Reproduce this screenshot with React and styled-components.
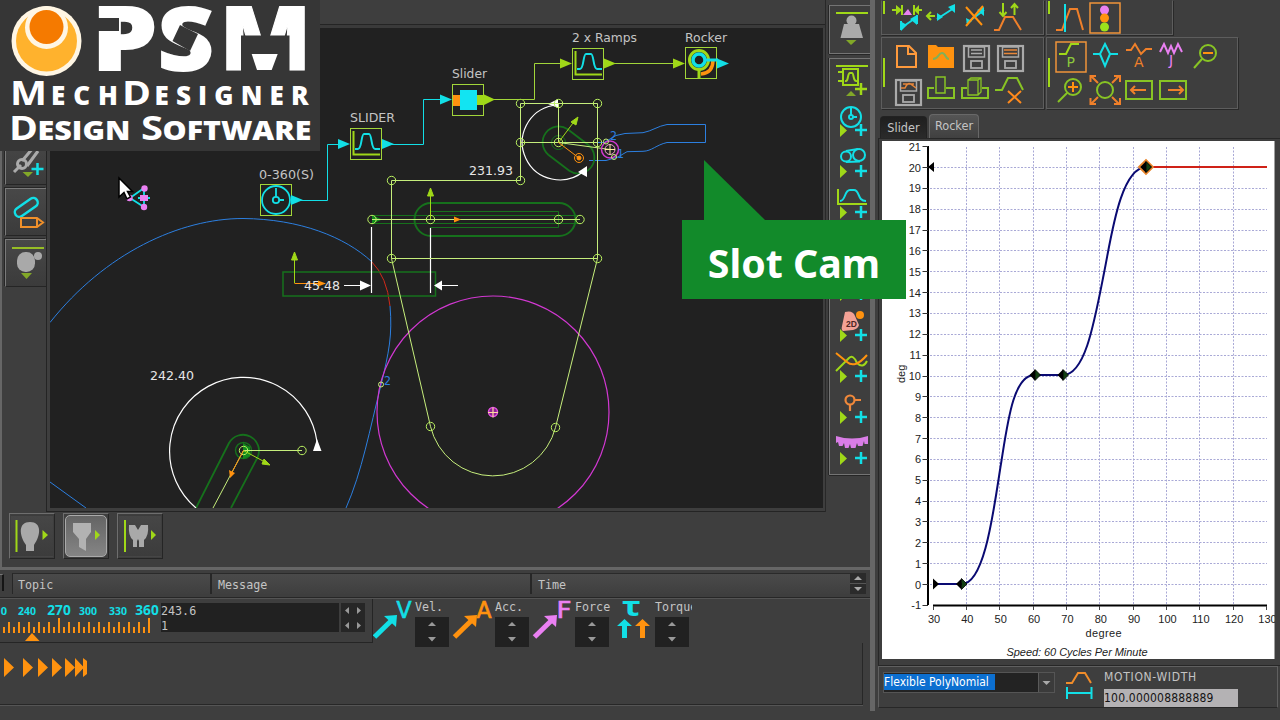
import React from "react";
import styled, { createGlobalStyle } from "styled-components";

const C = {
  panel: "#3e3e3e",
  canvas: "#212121",
  lime: "#a0d818",
  pale: "#c6ee7c",
  cyan: "#12dfe6",
  orange: "#ff920f",
  violet: "#ea80f2",
  blue: "#2c7fe0",
  darkGreen: "#16711c",
  grey: "#a9a9a9",
  text: "#c4c4c4",
};

const Global = createGlobalStyle`
  * { box-sizing: border-box; }
  body { margin: 0; background: ${C.panel}; overflow: hidden; }
  svg { display: block; }
`;

const Window = styled.div`
  position: relative;
  display: flex;
  width: 1280px;
  height: 720px;
  overflow: hidden;
  background: ${C.panel};
  color: ${C.text};
  font: 12px "Noto Sans", sans-serif;
`;

const Workspace = styled.div`
  width: 870px;
  display: flex;
  flex-direction: column;
`;

const Splitter = styled.div`
  width: 5px;
  height: 711px;
  background: #666;
`;

const Upper = styled.div`
  height: 567px;
  display: flex;
  flex-direction: column;
  border-left: 2px solid #666;
`;

const UpperRow = styled.div`
  height: 512px;
  display: flex;
`;

const LeftRail = styled.div`
  width: 45px;
  padding: 137px 0 0 3px;
  display: flex;
  flex-direction: column;
  gap: 3px;
  border-right: 1px solid #242424;
`;

const RailButton = styled.div`
  height: 48px;
  border-top: 1px solid #7a7a7a;
  border-left: 1px solid #7a7a7a;
  border-bottom: 1px solid #252525;
  box-shadow: -1px -1px #262626;
  background: linear-gradient(#484848, #3b3b3b);
`;

const CanvasFrame = styled.div`
  width: 779px;
  border-right: 1px solid #282828;
  display: flex;
  flex-direction: column;
`;

const CanvasTop = styled.div`
  height: 28px;
  border-bottom: 3px solid #3a3a3a;
  box-shadow: inset 0 -1px #242424;
`;

const CanvasBody = styled.div`
  height: 484px;
  padding-left: 3px;
  border-bottom: 1px solid #242424;
`;

const RightRail = styled.div`
  width: 44px;
  padding: 5px 0 0 3px;
  display: flex;
  flex-direction: column;
  gap: 4px;
`;

const RailBox = styled.div`
  height: ${(p) => p.$h}px;
  border: 1px solid #747474;
  border-right: 0;
  box-shadow: 0 1px #262626, -1px 0 #262626;
  padding: 3px 0 0 5px;
`;

const BottomTools = styled.div`
  display: flex;
  gap: 8px;
  padding: 1px 0 0 7px;
`;

const CamButton = styled.div`
  width: 46px;
  height: 46px;
  border: 1px solid #252525;
  border-top-color: #6e6e6e;
  border-left-color: #6e6e6e;
  padding: 1px;
`;

const CamFace = styled.div`
  height: 42px;
  border-radius: ${(p) => (p.$on ? "5px" : 0)};
  border: 1px solid ${(p) => (p.$on ? "#aaa" : "transparent")};
  background: ${(p) => (p.$on ? "linear-gradient(#646464, #858585)" : "linear-gradient(#464646, #3c3c3c)")};
`;

const LogHeader = styled.div`
  height: 31px;
  border-top: 3px solid #666;
  border-bottom: 1px solid #272727;
  display: flex;
  padding-top: 3px;
  font: 11.7px "DejaVu Sans Mono", monospace;
`;

const LogCell = styled.div`
  width: ${(p) => p.$w}px;
  height: 21px;
  padding-left: ${(p) => (p.$first ? 5 : 6)}px;
  line-height: 23px;
  border-left: ${(p) => (p.$first ? 1 : 2)}px solid #272727;
  border-top: 1px solid #2a2a2a;
  background: linear-gradient(#4a4a4a, #3f3f3f);
`;

const LogGrip = styled.div`
  width: 4px;
  height: 17px;
  margin: 1px 8px 0 0;
  border-right: 2px solid #151515;
  border-top: 1px solid #777;
`;

const Controls = styled.div`
  display: flex;
  height: 45px;
  border-top: 1px solid #545454;
  font: 11.7px "DejaVu Sans Mono", monospace;
`;

const Dial = styled.div`
  display: flex;
  width: 373px;
  height: 44px;
  border-bottom: 1px solid #252525;
  border-right: 1px solid #252525;
`;

const Readout = styled.div`
  width: 178px;
  height: 29px;
  margin: 4px 2px 0 0;
  background: #212121;
  line-height: 15px;
  padding-top: 1px;
`;

const Nudge = styled.div`
  width: 24px;
  height: 29px;
  margin-top: 4px;
  background: #262626;
`;

const Vectors = styled.div`
  display: flex;
  width: 319px;
  height: 50px;
  overflow-x: clip;
  overflow-y: visible;

  svg {
    overflow: visible;
  }
`;

const Vector = styled.div`
  width: 80px;
  flex: none;
  display: flex;
`;

const VectorSide = styled.div`
  width: 38px;
  margin-left: 2px;
  white-space: nowrap;
`;

const VectorLabel = styled.div`
  height: 18px;
  line-height: 17px;
`;

const Spin = styled.div`
  width: 34px;
  height: 30px;
  background: #212121;
`;

const Playback = styled.div`
  width: 863px;
  height: 62px;
  border-bottom: 1px solid #272727;
  border-right: 1px solid #272727;
  box-shadow: 0 1px #555;
  padding-top: 14px;
`;

const Side = styled.div`
  width: 405px;
  padding-left: 3px;
`;

const ToolRow = styled.div`
  display: flex;
  gap: 2px;
  height: ${(p) => p.$h}px;
  padding-left: 3px;
`;

const ToolGroup = styled.div`
  width: ${(p) => p.$w}px;
  height: ${(p) => p.$h}px;
  border: 1px solid #5d5d5d;
  border-top-color: ${(p) => (p.$cut ? "transparent" : "#5d5d5d")};
  box-shadow: 1px 1px #292929;
  display: flex;
  align-items: flex-start;
  padding-top: ${(p) => (p.$cut ? 0 : 1)}px;
`;

const Marker = styled.div`
  width: 2px;
  height: ${(p) => p.$h}px;
  margin: ${(p) => p.$top}px 4px 0 1px;
  background: ${C.lime};
`;

const Tools = styled.div`
  display: flex;
  flex-wrap: wrap;
  flex: 1;
`;

const Tabs = styled.div`
  display: flex;
  gap: 2px;
  height: 30px;
  padding: 5px 0 0 2px;
  align-items: flex-end;
  border-bottom: 1px solid #272727;
  font: 12.6px "DejaVu Sans Condensed", "DejaVu Sans", sans-serif;
  font-stretch: condensed;
`;

const Tab = styled.div`
  width: ${(p) => (p.$on ? 50 : 47)}px;
  height: ${(p) => (p.$on ? 24 : 22)}px;
  line-height: ${(p) => (p.$on ? 22 : 21)}px;
  text-align: center;
  white-space: nowrap;
  border-radius: 4px 4px 0 0;
  border: 1px solid ${(p) => (p.$on ? "#686868" : "#222")};
  border-bottom: 0;
  background: ${(p) => (p.$on ? "linear-gradient(#555, #404040)" : "linear-gradient(#1f1f1f, #2a2a2a)")};
`;

const ChartPane = styled.div`
  height: 527px;
  border-left: 1px solid #272727;
  border-bottom: 1px solid #272727;
  padding: 2px 0 0 3px;
`;

const MotionBar = styled.div`
  display: flex;
  height: 42px;
  width: 400px;
  padding-top: 1px;
  border: 1px solid #606060;
  border-bottom-color: #272727;
`;

const Combo = styled.div`
  display: flex;
  width: 172px;
  height: 21px;
  margin: 4px 11px 0 4px;
  border: 1px solid #555;
  background: #232323;
  color: #fff;
  font: 12px "DejaVu Sans Condensed", "DejaVu Sans", sans-serif;
  font-stretch: condensed;
`;

const ComboValue = styled.div`
  width: 154px;
  padding-top: 1px;
  line-height: 16px;
`;

const Selected = styled.span`
  display: inline-block;
  height: 16px;
  width: 111px;
  white-space: nowrap;
  background: #0c6fd0;
`;

const ComboArrow = styled.div`
  width: 16px;
  border-left: 1px solid #5a5a5a;
  background: #3b3b3b;
`;

const Field = styled.div`
  width: 134px;
  margin-left: 11px;
  font: 12px/19px "DejaVu Sans Condensed", "DejaVu Sans", sans-serif;
  font-stretch: condensed;
`;

const FieldLabel = styled.div`
  height: 21px;
  line-height: 18px;
  letter-spacing: 0.7px;
`;

const FieldValue = styled.div`
  height: 18px;
  line-height: 18px;
  background: #b4b2b4;
  color: #141414;
  letter-spacing: 0.2px;
`;

const Brand = styled.div`
  position: absolute;
  left: 0;
  top: 0;
  width: 320px;
  height: 151px;
  background: #363636;
`;

const Callout = styled.div`
  position: absolute;
  left: 682px;
  top: 160px;
  width: 224px;
`;

const CalloutBody = styled.div`
  height: 79px;
  background: #128a2a;
  color: #fff;
  text-align: center;
  font: bold 39.3px/86px "Noto Sans", sans-serif;
`;

const Svg = ({ w, h, box, children }) => (
  <svg width={w} height={h} viewBox={box || `0 0 ${w} ${h}`} fill="none">
    {children}
  </svg>
);

/* ---------- brand ---------- */
const Word = ({ x, y, w, size, weight = 700, edge = 0, adjust = "spacingAndGlyphs", children }) => (
  <text x={x} y={y} textLength={w} lengthAdjust={adjust} fontSize={size} fontWeight={weight} fontFamily="Open Sans, sans-serif" fill="#fff" stroke="#fff" strokeWidth={edge}>
    {children}
  </text>
);

const Logo = () => (
  <Brand>
    <Svg w={320} h={151}>
      <circle cx="46.500" cy="41" r="35" fill="#fff6e4" />
      <circle cx="46.500" cy="41" r="30.500" fill="#ffb22d" />
      <circle cx="46.500" cy="27.500" r="21.500" fill="#fff6e4" />
      <circle cx="46.500" cy="27" r="17" fill="#f57a00" />
      <Word x={92} y={69.500} w={65} size={88} weight={800} edge={1.8}>P</Word>
      <Word x={158} y={69.500} w={55.500} size={86} weight={800} edge={2}>S</Word>
      <Word x={219.500} y={69.500} w={92} size={88} weight={800} edge={1}>M</Word>
      <path d="M96 18H119V31H96Z" fill="#363636" />
      <path d="M172.500 41L180 25 198 34 190 51Z" fill="#363636" />
      <path d="M241 35.500H289.500V72H241Z" fill="#363636" />
      <path d="M251.700 54H277.700L271.700 70H257Z" fill="#fff" />
      <Word x={10} y={104.500} w={37} size={34}>M</Word>
      <Word x={51} y={104.500} w={67} size={26} weight={800} adjust="spacing">ECH</Word>
      <Word x={122} y={104.500} w={29} size={34}>D</Word>
      <Word x={154.500} y={104.500} w={154} size={26} weight={800} adjust="spacing">ESIGNER</Word>
      <Word x={9} y={139.500} w={29} size={33.500}>D</Word>
      <Word x={37.500} y={139.500} w={93} size={26} weight={800}>ESIGN</Word>
      <Word x={141} y={139.500} w={22} size={33.500}>S</Word>
      <Word x={162.500} y={139.500} w={149} size={26} weight={800}>OFTWARE</Word>
    </Svg>
  </Brand>
);

/* ---------- mechanism canvas ---------- */
const Label = ({ x, y, w, fill = C.text, children }) => (
  <text x={x} y={y} textLength={w} lengthAdjust="spacingAndGlyphs" fontSize="12" fontFamily="DejaVu Sans, sans-serif" fill={fill}>
    {children}
  </text>
);

const Block = ({ x, y }) => <rect x={x + 0.5} y={y + 0.5} width="31" height="31" stroke="#a2d63a" fill={C.canvas} />;

const Flow = ({ x, y, fill = C.cyan }) => <path d={`M${x} ${y - 5}L${x + 12} ${y}L${x} ${y + 5}Z`} fill={fill} />;

const RampGlyph = ({ x, y }) => (
  <g>
    <path d={`M${x + 3.5} ${y + 3}V${y + 26.5}H${x + 30}`} stroke={C.lime} strokeWidth="2" />
    <path d={`M${x + 5} ${y + 21}H${x + 8}C${x + 12} ${y + 21} ${x + 11} ${y + 6} ${x + 14} ${y + 6}H${x + 19}C${x + 22} ${y + 6} ${x + 21} ${y + 21} ${x + 25} ${y + 21}H${x + 30}`} stroke={C.cyan} strokeWidth="2" />
  </g>
);

const joints = [
  [520.5, 103.5], [558.5, 103.5], [597.5, 103.5], [520.5, 142.5], [558.5, 142.5], [597.5, 142.5],
  [391.5, 180.5], [520.5, 180.5], [391.5, 258.5], [597.5, 258.5], [372, 219.5], [430.5, 219.5],
  [558.5, 219.5], [580, 219.5], [430.5, 426.5], [555.5, 427.5], [302, 450.5], [243.5, 450.5],
];

const Mechanism = () => (
  <Svg w={773} h={480} box="50 28 773 480">
    <rect x="50" y="28" width="773" height="480" fill={C.canvas} />
    <g stroke={C.blue}>
      <path d="M50 322.500C105 253 180 218.500 243 218.500C300 219 345 237 371.500 261.500" />
      <path d="M390 306C392.500 335 389 352 381 385C370 428 362 472 346 508M50 482L86 508" />
      <path d="M590 142.500H604L616 135.500 625 133.500 643 132.700C652 131 658 126 667 124.500H705.500V142.500H667C656 145 652 151 643 151.300L627 151.700 618 157 606 160.500H589" />
    </g>
    <path d="M371.500 261.500Q387 277 390 306" stroke="#d02a1a" />
    <circle cx="493" cy="412" r="116" stroke="#d238d2" strokeWidth="1.200" />

    <g stroke={C.darkGreen}>
      <rect x="283" y="272" width="152.500" height="24" strokeWidth="1.500" />
      <rect x="414.500" y="203" width="161" height="33" rx="16.500" strokeWidth="2" />
      <path d="M430 211.500H558.500V227.500H430M372 215.500H580M372 223.500H580" />
      <path d="M567.700 129.300L588.700 145.300A16 16 0 0 1 569.300 170.700L548.300 154.700A16 16 0 0 1 567.700 129.300Z" strokeWidth="1.800" />
      <path d="M196 508L229 443A16 16 0 0 1 257.500 457.500L231 508" strokeWidth="1.800" />
      <circle cx="243.500" cy="450.500" r="8" strokeWidth="1.500" />
      <circle cx="558.500" cy="142.500" r="7" />
    </g>
    <path d="M372 215L382 219.500 372 224ZM243 443L250 447 250 456 243 459Z" fill="#128a1d" />

    <g stroke="#fff" strokeWidth="1.200">
      <path d="M553 105.500A37.500 37.500 0 1 0 584 171" />
      <path d="M317 442A74 74 0 1 0 196 508" />
      <path d="M371.500 227V293M430.500 228V293M344 285.500H360M440 285.500H458" />
    </g>
    <path d="M360 280.500L371 285.500 360 290.500ZM442 280.500L434 285.500 442 290.500ZM548 104L558 99V108ZM578 172L587 166V177ZM313 451L317 439 321.500 451Z" fill="#fff" />

    <g stroke={C.pale}>
      <path d="M520.500 103.500H597.500V258.500H391.500V180.500H520.500ZM520.500 142.500H597.500M558.500 103.500V142.500M372 219.500H580" />
      <path d="M391.500 258.500L430.500 426.500A64.400 64.400 0 0 0 555.500 427.500L597.500 258.500M243.500 450.500H302M243.500 450.500L213 508" />
      <path d="M558.500 142.500L610 149.500" />
      {joints.map(([x, y]) => (
        <circle key={`${x}-${y}`} cx={x} cy={y} r="4.200" stroke="#b9f060" />
      ))}
      <circle cx="381" cy="384.500" r="2.500" />
    </g>
    <g stroke={C.lime}>
      <path d="M294.500 283V260M430.500 219V196M558.500 142.500L573 123M243.500 450.500L263 461" />
      <path d="M291.500 260L294.500 252 297.500 260ZM427.500 196L430.500 188 433.500 196ZM571 122L578 117 576 125ZM264 459L270 465 262 464Z" fill={C.lime} />
    </g>
    <g stroke={C.orange}>
      <path d="M294.500 283.500H318M558.500 142.500L579 158M243.500 450.500L231 474" />
      <path d="M318 280.500L326 283.500 318 286.500ZM454 216.500L461 219.500 454 222.500ZM229 470L235 473 230 478Z" fill={C.orange} stroke="none" />
      <circle cx="579" cy="158" r="4.500" />
      <circle cx="579" cy="158" r="2" fill={C.orange} />
    </g>
    <circle cx="610" cy="149.500" r="8.500" stroke="#d238d2" strokeWidth="1.500" />
    <circle cx="610" cy="149.500" r="5" stroke="#f0a0d0" />
    <path d="M605 149.500H615M610 144.500V154.500" stroke="#fff2a0" />
    <circle cx="606" cy="141.500" r="2.500" stroke={C.pale} />
    <circle cx="614" cy="157" r="2.500" stroke={C.pale} />
    <circle cx="493" cy="412" r="4.500" fill="#8a2090" stroke="#e050e0" strokeWidth="1.500" />
    <path d="M488 412.500H498M493 407.500V417.500" stroke="#ffd9a0" strokeWidth="1.200" />

    <path d="M292 200.500H327.500V144.500H340M382 144.500H423.500V99.500H442" stroke={C.cyan} />
    <path d="M484 99.500H534.500V63.500H562M604 63.500H676" stroke="#a2d63a" />
    <Block x={260} y={184} />
    <Block x={350} y={128} />
    <Block x={452} y={84} />
    <Block x={572} y={48} />
    <Block x={685} y={47} />
    <circle cx="276" cy="200" r="14" stroke={C.cyan} strokeWidth="1.800" />
    <circle cx="276" cy="200" r="3.200" stroke={C.cyan} strokeWidth="1.800" />
    <path d="M276 188V197M279 200H284" stroke={C.cyan} strokeWidth="1.800" />
    <RampGlyph x={350} y={128} />
    <RampGlyph x={572} y={48} />
    <rect x="453" y="95" width="8" height="11" fill={C.orange} />
    <path d="M477 95H483V94L495 99.500 483 105.500V105H477Z" fill={C.lime} />
    <rect x="460" y="90" width="17" height="20" fill="#12e4f2" />
    <path d="M713 60Q713 73 701 74" stroke={C.orange} strokeWidth="3.500" />
    <path d="M699 70V78" stroke={C.lime} strokeWidth="3" />
    <circle cx="699" cy="60" r="9.500" stroke={C.lime} strokeWidth="3" />
    <circle cx="699" cy="60" r="6" stroke={C.cyan} strokeWidth="3.500" />
    <path d="M706 60H718" stroke={C.cyan} strokeWidth="3" />
    <Flow x={291} y={200} />
    <Flow x={338} y={144} />
    <Flow x={382} y={144} />
    <Flow x={440} y={99.5} />
    <Flow x={560} y={63.5} fill={C.lime} />
    <Flow x={604} y={63.5} fill={C.lime} />
    <Flow x={673} y={63.5} fill={C.lime} />
    <Flow x={717} y={63.5} />

    <Label x={259} y={179} w={55}>0-360(S)</Label>
    <Label x={350} y={122} w={45}>SLIDER</Label>
    <Label x={452} y={78} w={35}>Slider</Label>
    <Label x={572} y={42} w={65}>2 x Ramps</Label>
    <Label x={685} y={42} w={42}>Rocker</Label>
    <Label x={469} y={175} w={44} fill="#e6e6e6">231.93</Label>
    <Label x={304} y={290} w={36} fill="#e6e6e6">45.48</Label>
    <Label x={150} y={380} w={44} fill="#e6e6e6">242.40</Label>
    <Label x={384} y={385} w={7} fill={C.blue}>2</Label>
    <Label x={610} y={140} w={7} fill={C.blue}>2</Label>
    <Label x={617} y={158} w={7} fill={C.blue}>1</Label>

    <path d="M130 198L144 188V207ZM138 198H150" stroke={C.cyan} strokeWidth="1.800" />
    <g fill={C.violet}>
      <circle cx="129.500" cy="198" r="3.200" />
      <circle cx="144.500" cy="188.500" r="3.200" />
      <circle cx="144" cy="207" r="3.200" />
      <rect x="140" y="195" width="8" height="6" />
    </g>
    <path d="M119 178V197L124 192.500 127 199 130.500 197 127.500 191.500H132.500Z" fill="#fff" stroke="#000" strokeWidth="1.500" />
  </Svg>
);

/* ---------- rails ---------- */
const Plus = ({ x, y, c = C.cyan }) => <path d={`M${x - 6} ${y}H${x + 6}M${x} ${y - 6}V${y + 6}`} stroke={c} strokeWidth="2.500" />;

const RailCell = ({ children }) => (
  <Svg w={34} h={41}>
    <path d="M5 21L12 27.500 5 34Z" fill={C.lime} />
    <Plus x={26} y={27} />
    {children}
  </Svg>
);

const LeftTools = () => (
  <LeftRail>
    <RailButton>
      <Svg w={41} h={44} box="6 138 41 44">
        <path d="M14 172L21 165M22 161L33 148M27 166L38 151" stroke="#aaa" strokeWidth="3" />
        <circle cx="22" cy="164" r="4.500" stroke="#aaa" strokeWidth="3" />
        <path d="M22.500 172H33L28 177Z" fill="#82a828" />
        <Plus x={37.5} y={169} />
      </Svg>
    </RailButton>
    <RailButton>
      <Svg w={41} h={44} box="6 189 41 44">
        <rect x="13" y="203" width="26" height="9" rx="4.500" transform="rotate(-35 26 207)" stroke={C.cyan} strokeWidth="2.500" />
        <path d="M21 218H37L43 222.500 37 227H21ZM37 218V227" stroke="#f0902a" strokeWidth="2" />
      </Svg>
    </RailButton>
    <RailButton>
      <Svg w={41} h={44} box="6 240 41 44">
        <path d="M12 248H44" stroke="#96bd25" strokeWidth="2" />
        <rect x="17" y="252" width="18" height="20" rx="8.500" fill="#a9a9a9" />
        <circle cx="38" cy="256" r="4" fill="#a9a9a9" />
        <path d="M21 273H32L26.500 279Z" fill="#82a828" />
      </Svg>
    </RailButton>
  </LeftRail>
);

const ElementTools = () => (
  <RightRail>
    <RailBox $h={49}>
      <Svg w={34} h={43} box="835 9 34 43">
        <path d="M836 13H868" stroke={C.lime} strokeWidth="2" />
        <path d="M844 24H859L863 38H840.500Z" fill="#aaa" />
        <circle cx="851.500" cy="20.500" r="5" fill="#aaa" />
        <path d="M846 40H856.500L851 45Z" fill="#82a828" />
      </Svg>
    </RailBox>
    <RailBox $h={417}>
      <Svg w={34} h={41} box="835 62 34 41">
        <path d="M836 66H868" stroke={C.lime} strokeWidth="2" />
        <rect x="843" y="69" width="15" height="16" stroke={C.lime} strokeWidth="2" />
        <path d="M845 81C849 82 847 73 850 73H852C854 73 853 82 857 81M838 72H843M838 81H843" stroke={C.lime} strokeWidth="2" />
        <path d="M846 96L851 91 856 96Z" fill="#82a828" />
        <Plus x={861} y={89} c={C.lime} />
      </Svg>
      <RailCell>
        <circle cx="16" cy="14" r="10" stroke={C.cyan} strokeWidth="2" />
        <circle cx="16" cy="14" r="2" stroke={C.cyan} strokeWidth="2" />
        <path d="M16 5V12M18 14H22" stroke={C.cyan} strokeWidth="2" />
      </RailCell>
      <RailCell>
        <circle cx="11" cy="12.500" r="5" stroke={C.cyan} strokeWidth="2" />
        <circle cx="24" cy="11" r="6" stroke={C.cyan} strokeWidth="2" />
        <path d="M11 7L23 5M11 18L25 17.500" stroke={C.cyan} strokeWidth="2" />
      </RailCell>
      <RailCell>
        <path d="M3 4V19H32" stroke={C.lime} strokeWidth="2" />
        <path d="M5 16C11 16 9 5 15 5H19C25 5 22 16 31 16" stroke={C.cyan} strokeWidth="2" />
      </RailCell>
      <RailCell />
      <RailCell />
      <RailCell>
        <path d="M10 4Q18 2 20 8L24 17Q23 21 18 22L8 23Q6 22 7 18Z" fill="#f3a195" />
        <text x="11" y="18.500" fontSize="8.500" fontWeight="700" fontFamily="Liberation Sans, sans-serif" fill="#4a2424">2D</text>
        <circle cx="25" cy="7" r="4" fill={C.orange} />
      </RailCell>
      <RailCell>
        <path d="M1 22L14 9Q18 5 22 14Q28 20 32 12" stroke={C.lime} strokeWidth="2" />
        <path d="M1 4L12 13Q20 20 32 6" stroke={C.orange} strokeWidth="2" />
      </RailCell>
      <RailCell>
        <circle cx="15" cy="10" r="4.500" stroke="#f0883a" strokeWidth="2.200" />
        <path d="M20 10H26M15 15V21" stroke="#f0883a" strokeWidth="2.200" />
      </RailCell>
      <RailCell>
        <path d="M1 5Q17 10 33 5V13H29.500L29 10 27.500 15H23L22 12 20.500 17H16L15 13 13.500 17H10L9 12 7.500 15H4L3 11 1 12Z" fill="#d97de6" />
      </RailCell>
    </RailBox>
  </RightRail>
);

const CamTools = () => (
  <BottomTools>
    <CamButton>
      <CamFace>
        <Svg w={40} h={40} box="12 516 40 40">
          <path d="M16.500 520V552" stroke={C.lime} strokeWidth="2" />
          <path d="M26 551V545C19 535 18 522 30 522S41 535 34 545V551Z" fill={C.grey} />
          <path d="M42.500 530L48 535 42.500 540Z" fill={C.lime} />
        </Svg>
      </CamFace>
    </CamButton>
    <CamButton>
      <CamFace $on>
        <Svg w={40} h={40} box="66 516 40 40">
          <path d="M73 523H91V532L86 539V551L79 547V539L73 532Z" fill="#b2b2b2" />
          <path d="M95 530L100 535 95 540Z" fill={C.lime} />
        </Svg>
      </CamFace>
    </CamButton>
    <CamButton>
      <CamFace>
        <Svg w={40} h={40} box="120 516 40 40">
          <path d="M125 520V552" stroke={C.lime} strokeWidth="2" />
          <path d="M129 525H135L138 530 141 525H148Q149 536 144 540V547H139V541L138 539 137 541V547H133V540Q128 536 129 525Z" fill={C.grey} />
          <path d="M151 530L156 535 151 540Z" fill={C.lime} />
        </Svg>
      </CamFace>
    </CamButton>
  </BottomTools>
);

/* ---------- lower strip ---------- */
const scaleMarks = [
  [27, "240", 18, 11], [59, "270", 23.5, 13.5], [88, "300", 18, 11], [118, "330", 18, 11], [147, "360", 23.5, 13.5],
];

const Scale = () => (
  <Svg w={161} h={43} box="0 599 161 43">
    <g fontFamily="Noto Sans, sans-serif" fontWeight="700" fill={C.cyan} textAnchor="middle">
      <text x="4" y="615" fontSize="11">0</text>
      {scaleMarks.map(([x, t, w, s]) => (
        <text key={t} x={x} y="615" fontSize={s} textLength={w} lengthAdjust="spacingAndGlyphs">{t}</text>
      ))}
    </g>
    {Array.from({ length: 30 }, (_, i) => {
      const x = 149 - i * 5;
      const top = i === 0 || i === 18 ? 618 : i % 2 ? 627 : 622;
      return <path key={i} d={`M${x} ${top}V633`} stroke={C.orange} strokeWidth="2" />;
    })}
    <path d="M25 641L32 633 39.500 641Z" fill={C.orange} />
  </Svg>
);

const SpinArrows = () => (
  <Spin>
    <Svg w={34} h={30}>
      <path d="M13 9L17 5 21 9ZM13 20L17 24.500 21 20Z" fill="#999" />
    </Svg>
  </Spin>
);

const vectors = [["V", "Vel.", C.cyan], ["A", "Acc.", C.orange], ["F", "Force", C.violet]];

const VectorControls = () => (
  <Vectors>
    {vectors.map(([letter, label, color]) => (
      <Vector key={letter}>
        <Svg w={40} h={44}>
          <path d="M1.500 38L19 21" stroke={color} strokeWidth="5" />
          <path d="M11 17L24 16 23 28Z" fill={color} />
          <text x="23.500" y="18.500" textLength="15" lengthAdjust="spacingAndGlyphs" fontSize="23" fontFamily="DejaVu Sans, sans-serif" fill={color} stroke={color} strokeWidth=".7">{letter}</text>
        </Svg>
        <VectorSide>
          <VectorLabel>{label}</VectorLabel>
          <SpinArrows />
        </VectorSide>
      </Vector>
    ))}
    <Vector>
      <Svg w={40} h={44}>
        <text x="9" y="17" fontSize="27" textLength="19" lengthAdjust="spacingAndGlyphs" fontWeight="700" fontFamily="Noto Sans, sans-serif" fill={C.cyan}>τ</text>
        <path d="M4 27L11.500 20 19 27H14V39H9V27Z" fill={C.cyan} />
        <path d="M22 27L29.500 20 37 27H32V39H27V27Z" fill={C.orange} />
      </Svg>
      <VectorSide>
        <VectorLabel>Torque</VectorLabel>
        <SpinArrows />
      </VectorSide>
    </Vector>
  </Vectors>
);

/* ---------- side tool icons ---------- */
const Icon = ({ at, children }) => (
  <svg width="34" height="34" viewBox={`${at} 34 34`} fill="none" strokeWidth="2">
    {children}
  </svg>
);

const diskLabels = {
  plain: (x, y) => `M${x + 7} ${y + 4}H${x + 18}M${x + 7} ${y + 7.5}H${x + 18}`,
  list: (x, y) => `M${x + 6} ${y + 4}H${x + 19}M${x + 6} ${y + 7.5}H${x + 19}`,
  curve: (x, y) => `M${x + 5} ${y + 8}H${x + 9}Q${x + 12} ${y + 1} ${x + 16} ${y + 5}L${x + 20} ${y + 8}M${x + 7} ${y + 4}H${x + 18}`,
};

const Disk = ({ x, y, kind = "plain" }) => (
  <g stroke="#aaa">
    <rect x={x} y={y} width="25" height="25" strokeWidth="2.200" />
    <rect x={x + 4.5} y={y + 1} width="16" height="10" strokeWidth="1.500" />
    <rect x={x + 7} y={y + 15} width="11" height="7" strokeWidth="1.800" />
    <path d={diskLabels[kind](x, y)} stroke={kind === "plain" ? "#aaa" : "#e8873a"} strokeWidth="1.500" />
  </g>
);

const TopLeftTools = () => (
  <Tools>
    <Icon at="889 0">
      <path d="M892 9H899M914 9H922M902 4V14M914 4V14" stroke={C.lime} />
      <path d="M896 4L902 9 896 14ZM919 4L914 9 919 14Z" fill={C.lime} />
      <path d="M903 14L908 8 912 14Z" fill={C.violet} />
      <path d="M901 27L917 16M901 20V29M917 14V23" stroke={C.cyan} />
      <path d="M900 20L907 24 901 30ZM910 18L917 14V24Z" fill={C.cyan} />
    </Icon>
    <Icon at="923 0">
      <path d="M927 15H935M931 11L927 15 931 19" stroke={C.lime} />
      <path d="M937 18L954 7" stroke={C.cyan} />
      <path d="M937 12L943 16 937 20ZM948 6L955 3V12Z" fill={C.cyan} />
    </Icon>
    <Icon at="957 0">
      <path d="M967 22L984 9" stroke={C.cyan} />
      <path d="M966 17L972 20 967 24ZM977 9L984 6V15Z" fill={C.cyan} />
      <path d="M966 6L982 24M983 5L966 25" stroke={C.orange} />
    </Icon>
    <Icon at="991 0">
      <path d="M994 29H999L1005 16H1013L1021 29" stroke="#f0802a" />
      <path d="M1003 2V15M999.500 11L1003 15 1006.500 11M1014.500 14V3M1011 7L1014.500 3 1018 7" stroke={C.lime} />
    </Icon>
  </Tools>
);

const TopRightTools = () => (
  <Tools>
    <Icon at="1054 0">
      <path d="M1056 29H1062L1070 8H1077L1083 29" stroke="#f0802a" />
      <path d="M1065 3V31" stroke={C.cyan} />
    </Icon>
    <Icon at="1088 0">
      <rect x="1090" y="2" width="30" height="30" stroke="#f0943a" strokeWidth="1.500" />
      <circle cx="1104.500" cy="9" r="4.500" fill={C.violet} />
      <circle cx="1104.500" cy="17" r="4.500" fill={C.orange} />
      <circle cx="1104.500" cy="26" r="4.500" fill="#9be21c" />
    </Icon>
  </Tools>
);

const FileTools = () => (
  <Tools>
    <Icon at="889 39">
      <path d="M897 46H909L916 53V67H897ZM908 46V54H916" stroke="#ff9a3c" />
    </Icon>
    <Icon at="923 39">
      <path d="M928 45H936L938 47H954V68H928Z" fill={C.orange} />
      <path d="M933 59C939 59 938 53 942 53S945 59 949 59" stroke="#7fb05a" />
    </Icon>
    <Icon at="957 39"><Disk x={964} y={46} /></Icon>
    <Icon at="991 39"><Disk x={998} y={46} kind="list" /></Icon>
    <Icon at="889 73"><Disk x={896} y={80} kind="curve" /></Icon>
    <Icon at="923 73">
      <path d="M934 88H928V98H954V88H946" stroke="#88c424" />
      <rect x="936" y="77" width="9" height="16" stroke="#88c424" strokeWidth="1.500" />
    </Icon>
    <Icon at="957 73">
      <path d="M967 88H962V98H988V88H982" stroke="#88c424" />
      <path d="M968 80H978V95H968ZM968 80L971 78H981V92L978 95M978 80L981 78" stroke="#88c424" strokeWidth="1.300" />
    </Icon>
    <Icon at="991 73">
      <path d="M995 90H1002L1008 78H1017L1023 90" stroke="#88c424" />
      <path d="M1008 91L1021 103M1021 91L1008 103" stroke="#ff8a1c" />
    </Icon>
  </Tools>
);

const ViewTools = () => (
  <Tools>
    <Icon at="1054 39">
      <rect x="1056" y="42" width="30" height="30" stroke="#f0943a" strokeWidth="1.500" />
      <path d="M1059 54H1066L1071 44H1079" stroke={C.lime} />
      <text x="1066.500" y="67" fontSize="14" fontFamily="DejaVu Sans, sans-serif" fill="#8cc83c">P</text>
    </Icon>
    <Icon at="1088 39">
      <path d="M1093 54H1100L1105 44 1110 54H1118M1100 54L1105 66 1110 54" stroke={C.cyan} />
    </Icon>
    <Icon at="1122 39">
      <path d="M1126 50H1131L1135 44 1141 54 1146 49H1152" stroke="#f0802a" />
      <text x="1134" y="67" fontSize="14" fontFamily="DejaVu Sans, sans-serif" fill="#f0802a">A</text>
    </Icon>
    <Icon at="1156 39">
      <path d="M1160 52L1164 44 1168 53 1171 46 1174 53 1178 44 1182 52" stroke={C.violet} />
      <text x="1169" y="65" fontSize="14" fontFamily="DejaVu Sans, sans-serif" fill={C.violet}>J</text>
    </Icon>
    <Icon at="1190 39">
      <circle cx="1208" cy="53" r="8" stroke="#88c424" />
      <path d="M1202 59L1194 68" stroke="#88c424" />
      <path d="M1203 53H1213" stroke={C.orange} />
    </Icon>
    <Icon at="1054 73">
      <circle cx="1073" cy="87" r="8" stroke="#88c424" />
      <path d="M1067 93L1058 102" stroke="#88c424" />
      <path d="M1068 87H1078M1073 82V92" stroke={C.orange} />
    </Icon>
    <Icon at="1088 73">
      <circle cx="1105" cy="90" r="8" stroke="#88c424" />
      <path d="M1098 83L1091 76M1112 83L1119 76M1098 97L1091 104M1112 97L1119 104M1090.500 82V76H1096M1114 76H1120V82M1090.500 98V104H1096M1114 104H1120V98" stroke="#f0802a" />
    </Icon>
    <Icon at="1122 73">
      <rect x="1126" y="81" width="26" height="18" stroke="#88c424" />
      <path d="M1131 90H1146M1135 86L1131 90 1135 94" stroke="#f0802a" />
    </Icon>
    <Icon at="1156 73">
      <rect x="1160" y="81" width="26" height="18" stroke="#88c424" />
      <path d="M1168 90H1183M1179 86L1183 90 1179 94" stroke="#f0802a" />
    </Icon>
  </Tools>
);

/* ---------- motion chart ---------- */
const cx = (deg) => 933.5 + (deg - 30) * 3.335;
const cy = (v) => 584 - v * 20.85;

const Knot = ({ x, y, ring }) => (
  <g>
    {ring && <path d={`M${x - 7} ${y}L${x} ${y - 7}L${x + 7} ${y}L${x} ${y + 7}Z`} fill="#222" stroke="#e8842a" strokeWidth="1.800" />}
    <path d={`M${x - 5.5} ${y}L${x} ${y - 5.5}L${x} ${y + 5.5}Z`} fill="#000" />
    <path d={`M${x} ${y - 5.5}L${x + 5.5} ${y}L${x} ${y + 5.5}Z`} fill="#123f12" stroke="#000" strokeWidth=".8" />
  </g>
);

const Chart = () => (
  <Svg w={393} h={518} box="882 141 393 518">
    <rect x="882" y="141" width="392.500" height="518" fill="#fff" />
    <g stroke="#a9a9d6" strokeDasharray="2 1.500">
      {Array.from({ length: 21 }, (_, v) => (
        <path key={v} d={`M930 ${Math.round(cy(v)) + 0.5}H1267`} />
      ))}
      {Array.from({ length: 9 }, (_, i) => (
        <path key={i} d={`M${Math.round(cx(40 + i * 10)) - 0.5} 147V605`} />
      ))}
    </g>
    <path d="M928 146V605M933 605.500H1267" stroke="#000" strokeWidth="2" />
    <g fontSize="11" fontFamily="Liberation Sans, sans-serif" fill="#222">
      {Array.from({ length: 23 }, (_, i) => (
        <g key={i}>
          <path d={`M922.500 ${Math.round(cy(i - 1)) + 0.5}H928`} stroke="#333" />
          <text x="921" y={cy(i - 1) + 4.5} textAnchor="end">{i - 1}</text>
        </g>
      ))}
      {Array.from({ length: 11 }, (_, i) => (
        <g key={i}>
          <path d={`M${Math.round(cx(30 + i * 10)) - 0.5} 606V610`} stroke="#444" />
          <text x={cx(30 + i * 10) + 0.5} y="623" textAnchor="middle">{30 + i * 10}</text>
        </g>
      ))}
      <text x="1085.500" y="637" textLength="36">degree</text>
      <text x="1006.500" y="656" fontStyle="italic" textLength="141">Speed: 60 Cycles Per Minute</text>
      <text x="0" y="0" transform="translate(905 383) rotate(-90)">deg</text>
    </g>
    <path d="M933 584H962C984 584 993 515 1000 470C1007 428 1012 376 1034 375H1063C1085 375 1094 324 1104 273C1111 239 1120 168 1146 167" stroke="#0a0a72" strokeWidth="2" />
    <path d="M1146 167H1267" stroke="#cf2218" strokeWidth="2" />
    <path d="M928 167L934 162V172ZM933 578.500L939 584 933 589.500Z" fill="#000" />
    <Knot x={961.5} y={584} />
    <Knot x={1035} y={375} />
    <Knot x={1063} y={375} />
    <Knot x={1146} y={167} ring />
  </Svg>
);

export default function App() {
  return (
    <Window>
      <Global />
      <Workspace>
        <Upper>
          <UpperRow>
            <LeftTools />
            <CanvasFrame>
              <CanvasTop />
              <CanvasBody>
                <Mechanism />
              </CanvasBody>
            </CanvasFrame>
            <ElementTools />
          </UpperRow>
          <CamTools />
        </Upper>
        <LogHeader>
          <LogGrip />
          <LogCell $w={198} $first>Topic</LogCell>
          <LogCell $w={320}>Message</LogCell>
          <LogCell $w={320}>Time</LogCell>
          <Svg w={17} h={21}>
            <rect width="16" height="21" fill="#2b2b2b" />
            <path d="M0 10.500H16" stroke="#555" />
            <path d="M4 7L8 3 12 7ZM4 14L8 18 12 14Z" fill="#aaa" />
          </Svg>
        </LogHeader>
        <Controls>
          <Dial>
            <Scale />
            <Readout>
              <div>243.6</div>
              <div>1</div>
            </Readout>
            <Nudge>
              <Svg w={24} h={29}>
                <path d="M8 4L4 7.500 8 11ZM16 4L20 7.500 16 11ZM8 19L4 22.500 8 26ZM16 19L20 22.500 16 26Z" fill="#999" />
              </Svg>
            </Nudge>
          </Dial>
          <VectorControls />
        </Controls>
        <Playback>
          <Svg w={90} h={22}>
            <path d="M4 1L14 10.500 4 20ZM23 1L33 10.500 23 20ZM38 1L48 10.500 38 20ZM52 1L62 10.500 52 20ZM65 1L75 10.500 65 20ZM75 1L84 10.500 75 20ZM83 1L87 4V17L83 20Z" fill={C.orange} />
          </Svg>
        </Playback>
      </Workspace>
      <Splitter />
      <Side>
        <ToolRow $h={37}>
          <ToolGroup $w={163} $h={35} $cut>
            <Marker $h={13} $top={0} />
            <TopLeftTools />
          </ToolGroup>
          <ToolGroup $w={127} $h={35} $cut>
            <Marker $h={13} $top={0} />
            <TopRightTools />
          </ToolGroup>
        </ToolRow>
        <ToolRow $h={72}>
          <ToolGroup $w={163} $h={72}>
            <Marker $h={29} $top={19} />
            <FileTools />
          </ToolGroup>
          <ToolGroup $w={192} $h={72}>
            <Marker $h={29} $top={19} />
            <ViewTools />
          </ToolGroup>
        </ToolRow>
        <Tabs>
          <Tab>Slider</Tab>
          <Tab $on>Rocker</Tab>
        </Tabs>
        <ChartPane>
          <Chart />
        </ChartPane>
        <MotionBar>
          <Combo>
            <ComboValue>
              <Selected>Flexible PolyNomial</Selected>
            </ComboValue>
            <ComboArrow>
              <Svg w={15} h={19}>
                <path d="M3.500 8H11.500L7.500 12Z" fill="#aaa" />
              </Svg>
            </ComboArrow>
          </Combo>
          <Svg w={27} h={38} box="1066 668 27 38">
            <path d="M1066 683H1072L1078 673H1085L1091 683" stroke="#f08c2a" strokeWidth="2" />
            <path d="M1067 687V699M1091.500 687V699M1067 693H1091" stroke={C.cyan} strokeWidth="2" />
          </Svg>
          <Field>
            <FieldLabel>MOTION-WIDTH</FieldLabel>
            <FieldValue>100.000008888889</FieldValue>
          </Field>
        </MotionBar>
      </Side>
      <Logo />
      <Callout>
        <Svg w={90} h={60}>
          <path d="M22 60V0L83 60Z" fill="#128a2a" />
        </Svg>
        <CalloutBody>Slot Cam</CalloutBody>
      </Callout>
    </Window>
  );
}
